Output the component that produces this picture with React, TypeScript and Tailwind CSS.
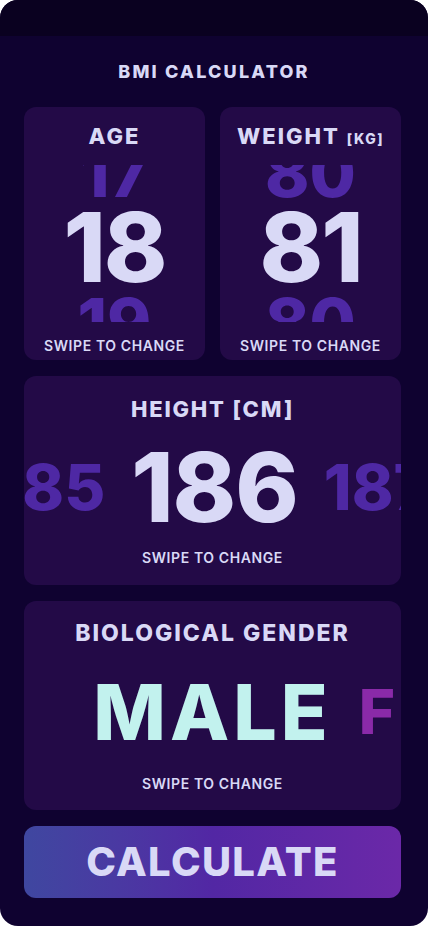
import React from "react";

const txt = "text-[#d9d9f6]";
const font = { fontFamily: "Inter, 'Noto Sans', sans-serif" };

function VPicker({ prev, cur, next }: { prev: string; cur: string; next: string }) {
  return (
    <div className="mt-[17px] h-[157px] w-full overflow-hidden">
      <div className="-mt-[30px] flex flex-col items-center">
        <div className="h-[75px] text-[67px] leading-[75px] font-extrabold text-[#4e28a4]">{prev}</div>
        <div className={`h-[75px] text-[96px] leading-[75px] font-extrabold ${txt} tracking-[-2px]`}>{cur}</div>
        <div className="h-[75px] text-[67px] leading-[75px] font-extrabold text-[#4e28a4]">{next}</div>
      </div>
    </div>
  );
}

function Swipe({ mt }: { mt: string }) {
  return (
    <div className={`${mt} h-[16px] text-[14px] leading-[16px] font-semibold tracking-[0.6px] ${txt} text-center`}>
      SWIPE TO CHANGE
    </div>
  );
}

export default function App() {
  return (
    <div className="w-[428px] h-[926px] bg-white" style={font}>
      <div className="h-[926px] rounded-[18px] overflow-hidden bg-[#0f0230] flex flex-col">
        <div className="h-[36px] bg-[#0a0120]" />
        <div className="h-[71px] flex items-center justify-center">
          <h1 className={`text-[18px] leading-[24px] font-extrabold tracking-[2.2px] ${txt}`}>BMI CALCULATOR</h1>
        </div>
        <div className="pl-6 pr-[27px] flex flex-col">
          <div className="grid grid-cols-2 gap-[15px]">
            <div className="h-[253px] rounded-[12px] bg-[#230a47] flex flex-col items-center pt-[17px]">
              <div className={`h-[24px] text-[22px] leading-[24px] font-extrabold tracking-[2px] ${txt}`}>AGE</div>
              <VPicker prev="17" cur="18" next="19" />
              <Swipe mt="mt-[16px]" />
            </div>
            <div className="h-[253px] rounded-[12px] bg-[#230a47] flex flex-col items-center pt-[17px]">
              <div className={`h-[24px] text-[22px] leading-[24px] font-extrabold tracking-[2px] ${txt} whitespace-nowrap`}>
                WEIGHT <span className="text-[14px] tracking-[1.5px]">[KG]</span>
              </div>
              <VPicker prev="80" cur="81" next="80" />
              <Swipe mt="mt-[16px]" />
            </div>
          </div>

          <div className="mt-4 h-[209px] rounded-[12px] bg-[#230a47] flex flex-col items-center pt-[21px]">
            <div className={`h-[24px] text-[22px] leading-[24px] font-extrabold tracking-[1.8px] ${txt}`}>HEIGHT [CM]</div>
            <div className="mt-[11px] h-[110px] w-full overflow-hidden flex items-center justify-center gap-[26px]">
              <div className="shrink-0 text-[63px] leading-[110px] font-extrabold text-[#4e28a4]">185</div>
              <div className={`shrink-0 text-[96px] leading-[110px] font-extrabold ${txt} tracking-[-1px]`}>186</div>
              <div className="shrink-0 text-[63px] leading-[110px] font-extrabold text-[#4e28a4]">187</div>
            </div>
            <Swipe mt="mt-[8px]" />
          </div>

          <div className="mt-4 h-[209px] rounded-[12px] bg-[#230a47] flex flex-col items-center pt-[20px]">
            <div className={`h-[24px] text-[23px] leading-[24px] font-extrabold tracking-[2px] ${txt}`}>BIOLOGICAL GENDER</div>
            <div className="mt-[17px] h-[100px] w-full grid grid-cols-[minmax(0,1fr)_auto_minmax(0,1fr)] items-center">
              <div />
              <div className="text-[77px] leading-[100px] font-extrabold tracking-[4px] text-[#c2f2ee]">MALE</div>
              <div className="overflow-hidden whitespace-nowrap pl-[27px] text-[62px] leading-[100px] font-extrabold tracking-[10px] text-[#8a2aa8] rounded-r-[12px]">
                FEMALE
              </div>
            </div>
            <Swipe mt="mt-[14px]" />
          </div>

          <button className="mt-4 h-[72px] rounded-[12px] bg-gradient-to-r from-[#3f47a0] via-[#5227a4] to-[#6b28a8] flex items-center justify-center">
            <span className={`text-[40px] leading-[48px] font-extrabold tracking-[1.3px] ${txt}`}>CALCULATE</span>
          </button>
        </div>
      </div>
    </div>
  );
}
